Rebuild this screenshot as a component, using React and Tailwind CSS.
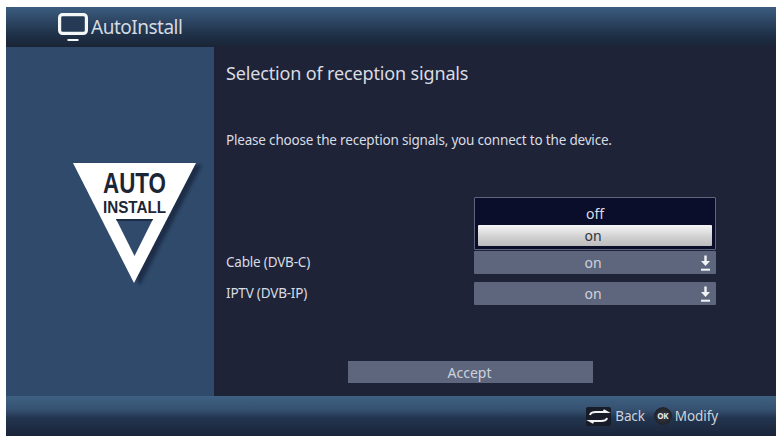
const font = { fontFamily: '"Noto Sans", sans-serif' };

function Monitor() {
  return (
    <svg width="30" height="28" viewBox="0 0 30 28" className="shrink-0">
      <rect x="1.6" y="1.6" width="26.8" height="18.8" rx="3" fill="#263a55" stroke="#f4f6f8" strokeWidth="3.2" />
      <rect x="9.5" y="26" width="11" height="2" fill="#f4f6f8" />
    </svg>
  );
}

function Logo() {
  return (
    <svg width="140" height="135" viewBox="0 0 140 135" className="block">
      <defs>
        <filter id="sh" x="-20%" y="-20%" width="140%" height="140%">
          <feGaussianBlur stdDeviation="1.6" />
        </filter>
      </defs>
      <path d="M7 3H130L68 123Z" transform="translate(2 2)" fill="#14233a" opacity="0.7" filter="url(#sh)" />
      <path d="M3 3H126L64 123Z" fill="#ffffff" />
      <path d="M46 59H83L64.5 96Z" fill="#2f4a6b" />
      <path d="M46 59H83L82 61H47Z" fill="#1b2c44" />
      <text x="64.5" y="33" textAnchor="middle" textLength="63" lengthAdjust="spacingAndGlyphs" fontFamily="'Liberation Sans', sans-serif" fontWeight="700" fontSize="30" fill="#1c2535">AUTO</text>
      <text x="64.5" y="53" textAnchor="middle" textLength="63" lengthAdjust="spacingAndGlyphs" fontFamily="'Liberation Sans', sans-serif" fontWeight="700" fontSize="17" fill="#1c2535">INSTALL</text>
    </svg>
  );
}

function Arrow() {
  return (
    <svg width="11" height="17" viewBox="0 0 11 17" className="shrink-0">
      <path d="M4.3 0.5H6.7V6H10L5.5 11L1 6H4.3Z" fill="#f2f3f5" />
      <rect x="1" y="13.7" width="9" height="2" fill="#f2f3f5" />
    </svg>
  );
}

function Select({ children }) {
  return (
    <div className="relative flex h-[23px] w-[242px] items-center justify-center rounded-[1px] bg-[#5d667c] text-[14px] text-[#cdd2dc]">
      <span className="pr-[4px]">{children}</span>
      <span className="absolute right-[5px] top-[4px] flex"><Arrow /></span>
    </div>
  );
}

function SwapIcon() {
  return (
    <svg width="25" height="19" viewBox="0 0 25 19" className="shrink-0">
      <rect width="25" height="19" rx="2" fill="#171c28" />
      <path d="M4 8C4.5 5.5 7 5 10 5H21L17.5 3" fill="none" stroke="#f0f2f4" strokeWidth="2" />
      <path d="M21 11C20.5 13.5 18 14 15 14H4L7.5 16" fill="none" stroke="#f0f2f4" strokeWidth="2" />
    </svg>
  );
}

function OkIcon() {
  return (
    <div className="flex h-[18px] w-[18px] items-center justify-center rounded-full bg-[radial-gradient(#3a3c44,#16181f)] text-[8px] font-bold tracking-[-0.3px] text-[#e8e8e8]">OK</div>
  );
}

export default function App() {
  return (
    <div style={font} className="h-[437px] w-[776px] overflow-hidden bg-white pb-[1px] pl-[6px] pt-[7px]">
      <div className="flex h-full flex-col bg-[#1e2338]">
        <header className="flex h-[40px] shrink-0 items-center gap-[3px] bg-[linear-gradient(#3c5d80_0%,#2f4967_30%,#1f3048_70%,#1a2436_100%)] pl-[52px] text-[19px] text-[#d5dae0]">
          <Monitor />
          <span className="leading-none tracking-[-0.5px]">AutoInstall</span>
        </header>

        <div className="flex min-h-0 flex-1">
          <aside className="flex w-[208px] shrink-0 items-start bg-[#2f4a6b] pl-[64px] pt-[113px]">
            <Logo />
          </aside>

          <main className="flex min-w-0 flex-1 flex-col pl-[12px] pr-[60px] text-[#d9dce2]">
            <h1 className="mt-[13px] text-[18px] font-normal leading-[26px] tracking-[-0.15px]">Selection of reception signals</h1>
            <p className="mt-[44px] text-[13.5px] leading-[20px] tracking-[-0.19px]">Please choose the reception signals, you connect to the device.</p>

            <div className="relative mt-[101px] flex flex-col gap-[8px] text-[13.5px]">
              <div className="flex items-center justify-between">
                <span className="tracking-[-0.2px]">Cable (DVB-C)</span>
                <Select>on</Select>
              </div>
              <div className="flex items-center justify-between">
                <span className="tracking-[-0.2px]">IPTV (DVB-IP)</span>
                <Select>on</Select>
              </div>

              <div className="absolute bottom-[55px] right-0 flex h-[53px] w-[242px] flex-col rounded-[1px] border border-[#5d667c] bg-[#0b0e2a] px-[3px] pt-[6px] text-[14px]">
                <div className="h-[21px] text-center leading-[20px] text-[#d9dce2]">off</div>
                <div className="flex h-[21px] items-center justify-center rounded-[1px] bg-[linear-gradient(#f6f6f6,#cfcfcf_60%,#bcbcbc)] pr-[4px] text-[#30343f]">on</div>
              </div>
            </div>

            <div className="mt-[56px] flex pl-[122px]">
              <button className="h-[22px] w-[245px] bg-[#5d667c] pr-[2px] text-[14px] text-[#cdd2dc]">Accept</button>
            </div>
          </main>
        </div>

        <footer className="flex h-[40px] shrink-0 items-center justify-end bg-[linear-gradient(#3f6183_0%,#35506f_35%,#223550_55%,#1a2438_100%)] pr-[58px] text-[13.5px] text-[#ccd3dd]">
          <SwapIcon />
          <span className="ml-[4px] tracking-[-0.1px]">Back</span>
          <span className="ml-[9px] flex"><OkIcon /></span>
          <span className="ml-[3px] tracking-[-0.1px]">Modify</span>
        </footer>
      </div>
    </div>
  );
}
